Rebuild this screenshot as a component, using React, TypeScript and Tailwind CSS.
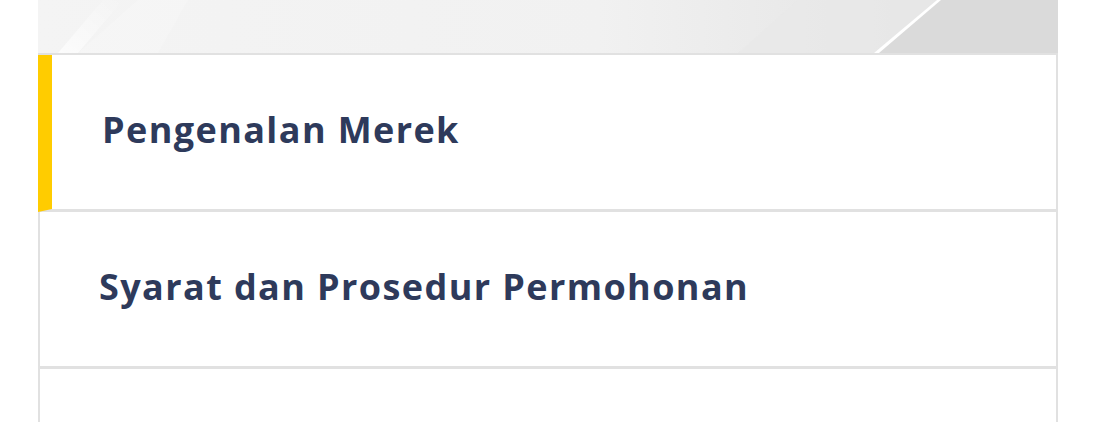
import React from "react";

function Banner() {
  return (
    <div className="h-[53px] w-full overflow-hidden bg-[#f2f2f2]">
      <svg width="1020" height="53" viewBox="0 0 1020 53" preserveAspectRatio="none" className="block">
        <defs>
          <linearGradient id="bg" x1="0" y1="0" x2="1" y2="0">
            <stop offset="0" stopColor="#f4f4f4" />
            <stop offset="0.55" stopColor="#f1f1f1" />
            <stop offset="0.8" stopColor="#e7e7e7" />
            <stop offset="1" stopColor="#dcdcdc" />
          </linearGradient>
          <linearGradient id="streak" x1="0" y1="1" x2="1" y2="0">
            <stop offset="0" stopColor="#ffffff" stopOpacity="0.9" />
            <stop offset="1" stopColor="#ffffff" stopOpacity="0" />
          </linearGradient>
        </defs>
        <rect width="1020" height="53" fill="url(#bg)" />
        <polygon points="700,53 760,0 900,0 840,53" fill="#e8e8e8" opacity="0.7" />
        <polygon points="840,53 902,0 1020,0 1020,53" fill="#dadada" />
        <polygon points="836,53 841,53 903,0 899,0" fill="#ffffff" />
        <polygon points="20,53 40,53 85,0 65,0" fill="url(#streak)" opacity="0.8" />
        <polygon points="40,53 120,53 150,0 100,0" fill="#f7f7f7" opacity="0.6" />
      </svg>
    </div>
  );
}

function Item({ title, active }: { title?: string; active?: boolean }) {
  return (
    <div
      className={`flex h-[157px] items-center border-b-[3px] border-r-2 border-b-[#e1e1e1] border-r-[#e1e1e1] bg-white ${
        active ? "border-l-[14px] border-l-[#ffcc00] pl-[50px]" : "border-l-2 border-l-[#e1e1e1] pl-[59px]"
      }`}
    >
      {title ? (
        <span className="-mt-[4px] text-[36px] font-bold leading-none tracking-[1.4px] text-[#2e3a5b]">{title}</span>
      ) : null}
    </div>
  );
}

export default function App() {
  return (
    <div className="h-[422px] w-[1096px] overflow-hidden bg-white" style={{ fontFamily: "'Open Sans', Inter, sans-serif" }}>
      <div className="ml-[38px] w-[1020px]">
        <Banner />
        <div className="border-t-2 border-[#e1e1e1]">
          <Item title="Pengenalan Merek" active />
          <Item title="Syarat dan Prosedur Permohonan" />
          <Item />
        </div>
      </div>
    </div>
  );
}
